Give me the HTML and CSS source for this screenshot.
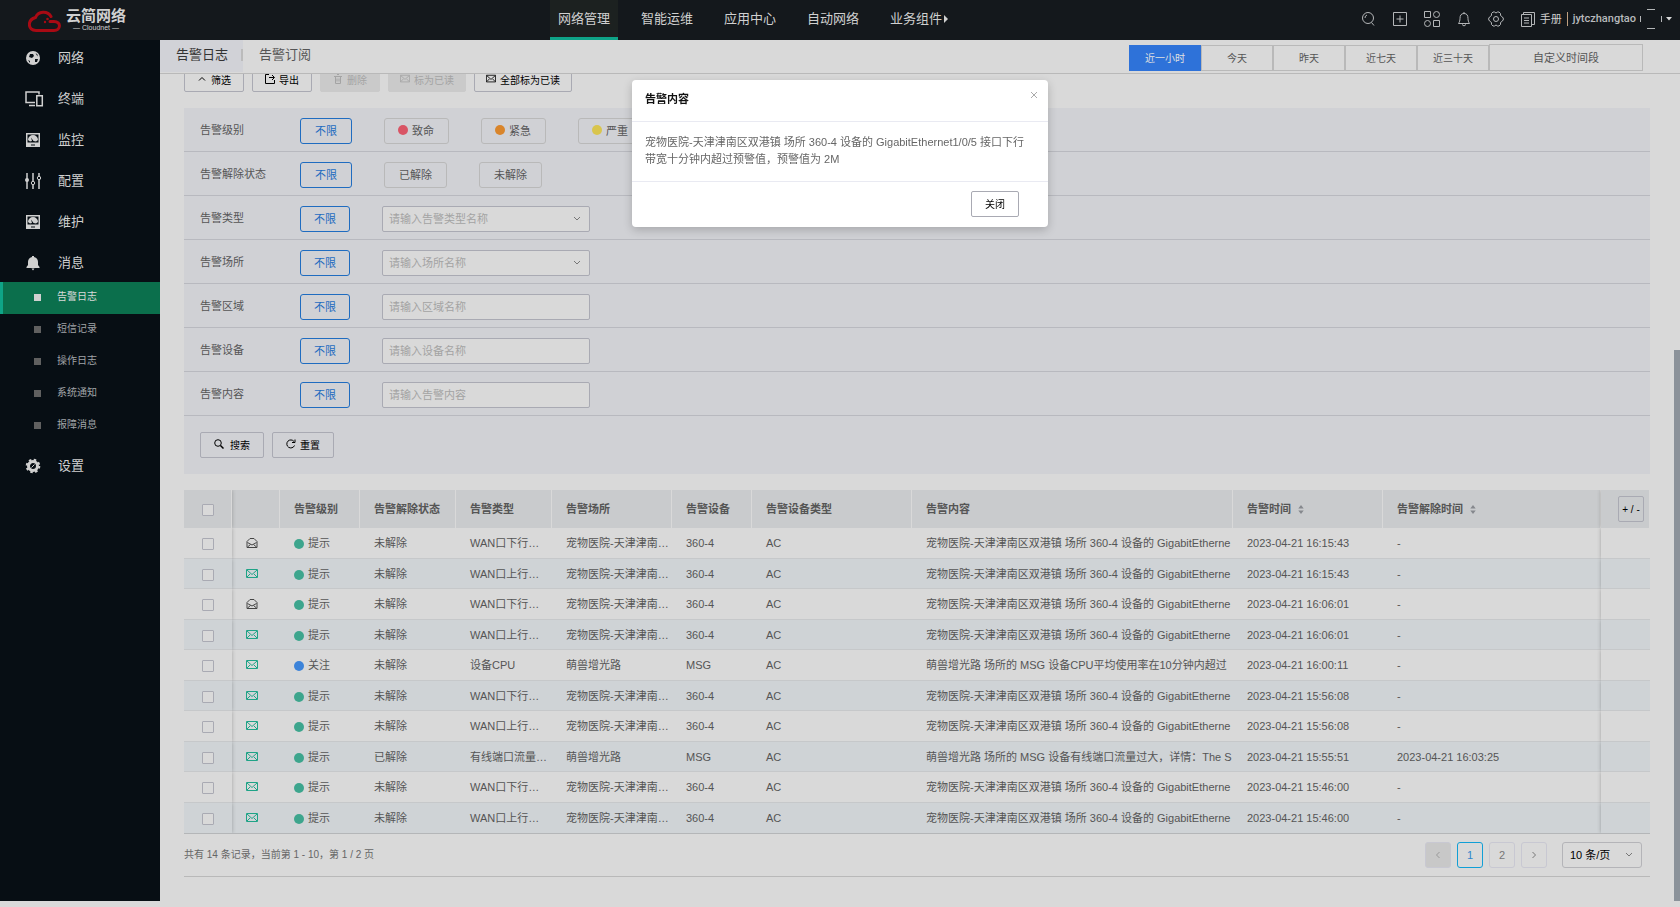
FILE: index.html
```html
<!DOCTYPE html>
<html lang="zh-CN">
<head>
    <meta charset="UTF-8">
    <meta name="viewport" content="width=device-width, initial-scale=1.0">
    <title>告警日志 - 云简网络</title>
    <link rel="stylesheet" href="styles.css">
</head>
<body>
    <!-- Shared icons -->
    <svg class="sprite" aria-hidden="true">
        <symbol id="i-gauge" viewBox="0 0 16 16"><path fill="currentColor" fill-rule="evenodd" d="M1 1h14v14H1zM2.500 2.500v8h11v-8z"/><path fill="currentColor" d="M3 8a5 5 0 0 1 10 0l-2 1.500-2.500-.5L6 5.500 7 9 5 9.500z"/><path stroke="#070e14" d="M6 13h4"/></symbol>
        <symbol id="i-mail" viewBox="0 0 12 10"><path fill="none" stroke="currentColor" d="M.5.5h11v8H.5zM1 1l5 4.500L11 1M1 8l3-3M11 8 8 5"/></symbol>
        <symbol id="i-mail-open" viewBox="0 0 12 12"><path fill="none" stroke="currentColor" d="M1 10.500V4.500l3-3h4l3 3v6zM1.500 5.500 6 8l4.500-2.500M1.500 10l3-2.500M10.500 10l-3-2.500"/></symbol>
    </svg>

    <header class="header">
        <div class="brand">
            <svg class="brand-cloud" viewBox="0 0 34 25" aria-hidden="true"><path fill="none" stroke="#a80a14" stroke-width="3" stroke-linecap="round" d="M23 8.500A8.500 8 0 0 0 7.500 9.500C-1 12-.5 22.500 8 22.500h18c7 0 7.500-9 0-9h-4"/><g fill="#a80a14"><circle cx="19.500" cy="11" r="1.300"/><circle cx="17" cy="14" r="1.200"/></g></svg>
            <div class="brand-text">
                <strong>云简网络</strong>
                <small>— Cloudnet —</small>
            </div>
        </div>
        <nav class="top-nav">
            <a href="#" class="active">网络管理</a>
            <a href="#">智能运维</a>
            <a href="#">应用中心</a>
            <a href="#">自动网络</a>
            <a href="#">业务组件<svg width="5" height="8" viewBox="0 0 5 8"><path fill="currentColor" d="M0 0l4 4-4 4z"/></svg></a>
        </nav>
        <div class="header-actions">
            <button type="button" aria-label="搜索"><svg viewBox="0 0 16 16"><circle cx="8" cy="7" r="5.500"/><path d="M11.500 11.500 14 14.500M5 7a3 3 0 0 1 2-3"/></svg></button>
            <button type="button" aria-label="添加"><svg viewBox="0 0 16 16"><path d="M1.500 1.500h13v13h-13zM8 4.500v7M4.500 8h7"/></svg></button>
            <button type="button" aria-label="应用"><svg viewBox="0 0 16 16"><path d="M.5.500h6v6h-6zM9.500 9.500h6v6h-6z"/><circle cx="12.500" cy="3.500" r="3"/><circle cx="3.500" cy="12.500" r="3"/></svg></button>
            <button type="button" aria-label="通知"><svg viewBox="0 0 16 16"><path d="M8 1v1.500M8 2.500c-3 0-4 2-4 5 0 2-.5 3.500-1.500 5h11c-1-1.500-1.500-3-1.500-5 0-3-1-5-4-5zM6 13.500l2 1.500 2-1.500"/></svg></button>
            <button type="button" aria-label="设置"><svg viewBox="0 0 16 16"><path d="M5 1h1.500L8 2l1.500-1H11l1.500 1.500v2l2 1.500L15.500 8l-1 2-2 1.500v2L11 15H9.500L8 14l-1.500 1H5l-1.500-1.500v-2l-2-1.500-1-2 1-2 2-1.500v-2z"/><circle cx="8" cy="8" r="2.500"/></svg></button>
            <a href="#" class="manual"><svg viewBox="0 0 16 16"><path d="M1.500 3.500h10v12h-10zM3.500 3.500v-2h11v12h-3M4 7h5M4 9.500h5M4 12h5"/></svg>手册</a>
            <span class="divider"></span>
            <a href="#" class="user">jytczhangtao
                <svg class="avatar" viewBox="0 0 22 20"><path d="M7 .5h8M7 19.500h8M.5 7v6M21.500 7v6"/></svg>
                <svg class="caret" viewBox="0 0 6 4"><path d="M0 0h6L3 3.500z"/></svg>
            </a>
        </div>
    </header>

    <div class="layout">
        <aside class="sidebar">
            <ul class="menu">
                <li><a href="#"><svg viewBox="0 0 16 16"><circle cx="8" cy="8" r="7" fill="currentColor"/><path fill="#070e14" d="M5 4h3l1 2-2 2-3-1zM10 9l3 0-1 3-2 0zM3 10l2 1 0 2zM10.500 3l2 1.500v2z"/></svg>网络</a></li>
                <li><a href="#"><svg class="wide" viewBox="0 0 19 16"><path fill="none" stroke="currentColor" stroke-width="1.500" d="M10 11.500H1V1h13v2.500M4 14.500h6"/><path fill="none" stroke="currentColor" stroke-width="1.500" d="M11.800 4.800h5.500v10h-5.500z"/></svg>终端</a></li>
                <li><a href="#"><svg><use href="#i-gauge"/></svg>监控</a></li>
                <li><a href="#"><svg viewBox="0 0 16 16"><path fill="none" stroke="currentColor" stroke-width="1.500" d="M2 0v16M8 0v8M8 12v4M14 0v3M14 7v9"/><circle cx="2" cy="7" r="2" fill="currentColor"/><circle cx="8" cy="10" r="1.700" fill="none" stroke="currentColor"/><circle cx="14" cy="5" r="1.700" fill="none" stroke="currentColor"/></svg>配置</a></li>
                <li><a href="#"><svg><use href="#i-gauge"/></svg>维护</a></li>
                <li>
                    <a href="#"><svg viewBox="0 0 16 16"><path fill="currentColor" d="M7 1h2v1c3 .5 4 3 4 5v3l1.500 2v1h-13v-1L3 10V7c0-2 1-4.500 4-5zM6.500 13.500h3L8 15.500z"/></svg>消息</a>
                    <ul class="submenu">
                        <li class="active"><a href="#">告警日志</a></li>
                        <li><a href="#">短信记录</a></li>
                        <li><a href="#">操作日志</a></li>
                        <li><a href="#">系统通知</a></li>
                        <li><a href="#">报障消息</a></li>
                    </ul>
                </li>
                <li><a href="#"><svg viewBox="0 0 16 16"><circle cx="8" cy="8" r="4.500" fill="none" stroke="currentColor" stroke-width="3"/><circle cx="8" cy="8" r="6.300" fill="none" stroke="currentColor" stroke-width="2" stroke-dasharray="2.500 2.450"/><path stroke="currentColor" d="M6.500 9.500l3-3"/></svg>设置</a></li>
            </ul>
        </aside>

        <main class="main">
            <div class="tab-bar">
                <a href="#" class="tab active">告警日志</a>
                <a href="#" class="tab">告警订阅</a>
                <div class="date-range">
                    <button type="button" class="active">近一小时</button>
                    <button type="button">今天</button>
                    <button type="button">昨天</button>
                    <button type="button">近七天</button>
                    <button type="button">近三十天</button>
                    <button type="button" class="custom">自定义时间段</button>
                </div>
            </div>

            <div class="content">
                <div class="toolbar">
                    <button type="button" class="btn"><svg viewBox="0 0 10 10"><path d="M2 6.500l3-3 3 3"/></svg>筛选</button>
                    <button type="button" class="btn"><svg viewBox="0 0 10 10"><path d="M4 .5H.5v9h9V6M4 3.500h5M7 1l2.500 2.500L7 6"/></svg>导出</button>
                    <button type="button" class="btn" disabled><svg viewBox="0 0 10 10"><path d="M1 2.500h8M4 .5h2M2.500 2.500v7h5v-7M4 4.500v3M6 4.500v3"/></svg>删除</button>
                    <button type="button" class="btn tight" disabled><svg><use href="#i-mail"/></svg>标为已读</button>
                    <button type="button" class="btn tight"><svg><use href="#i-mail"/></svg>全部标为已读</button>
                </div>

                <form class="filters">
                    <div class="filter-row">
                        <span class="filter-label">告警级别</span>
                        <button type="button" class="option all">不限</button>
                        <button type="button" class="option"><i class="dot fatal"></i>致命</button>
                        <button type="button" class="option"><i class="dot urgent"></i>紧急</button>
                        <button type="button" class="option"><i class="dot serious"></i>严重</button>
                    </div>
                    <div class="filter-row">
                        <span class="filter-label">告警解除状态</span>
                        <button type="button" class="option all">不限</button>
                        <button type="button" class="option">已解除</button>
                        <button type="button" class="option">未解除</button>
                    </div>
                    <div class="filter-row">
                        <label class="filter-label" for="type">告警类型</label>
                        <button type="button" class="option all small">不限</button>
                        <select id="type" class="field"><option>请输入告警类型名称</option></select>
                    </div>
                    <div class="filter-row">
                        <label class="filter-label" for="site">告警场所</label>
                        <button type="button" class="option all small">不限</button>
                        <select id="site" class="field"><option>请输入场所名称</option></select>
                    </div>
                    <div class="filter-row">
                        <label class="filter-label" for="area">告警区域</label>
                        <button type="button" class="option all small">不限</button>
                        <input id="area" class="field" type="text" placeholder="请输入区域名称">
                    </div>
                    <div class="filter-row">
                        <label class="filter-label" for="device">告警设备</label>
                        <button type="button" class="option all small">不限</button>
                        <input id="device" class="field" type="text" placeholder="请输入设备名称">
                    </div>
                    <div class="filter-row">
                        <label class="filter-label" for="message">告警内容</label>
                        <button type="button" class="option all small">不限</button>
                        <input id="message" class="field" type="text" placeholder="请输入告警内容">
                    </div>
                    <div class="filter-actions">
                        <button type="button" class="btn"><svg viewBox="0 0 10 10"><circle cx="4" cy="4" r="3.300"/><path stroke-width="1.500" d="M6.500 6.500 9.500 9.500"/></svg>搜索</button>
                        <button type="button" class="btn tight"><svg viewBox="0 0 10 10"><path d="M8.500 6.500A4 4 0 1 1 8 2.500M9 .5v3H6"/></svg>重置</button>
                    </div>
                </form>

                <table class="log-table">
                    <colgroup>
                        <col class="c-check"><col class="c-icon"><col class="c-level"><col class="c-state"><col class="c-type"><col class="c-site"><col class="c-device"><col class="c-kind"><col class="c-text"><col class="c-time"><col><col class="c-tool">
                    </colgroup>
                    <thead>
                        <tr>
                            <th class="pin-left"><input type="checkbox" aria-label="全选"></th>
                            <th></th>
                            <th>告警级别</th>
                            <th>告警解除状态</th>
                            <th>告警类型</th>
                            <th>告警场所</th>
                            <th>告警设备</th>
                            <th>告警设备类型</th>
                            <th>告警内容</th>
                            <th>告警时间<svg class="sort" viewBox="0 0 6 10"><path d="M0 4l3-4 3 4zM0 6h6l-3 4z"/></svg></th>
                            <th>告警解除时间<svg class="sort" viewBox="0 0 6 10"><path d="M0 4l3-4 3 4zM0 6h6l-3 4z"/></svg></th>
                            <th class="pin-right"><button type="button" class="columns">+ / -</button></th>
                        </tr>
                    </thead>
                    <tbody id="logRows"></tbody>
                </table>

                <div class="pager">
                    <span class="pager-info">共有 14 条记录，当前第 1 - 10，第 1 / 2 页</span>
                    <button type="button" class="page" disabled aria-label="上一页"><svg viewBox="0 0 8 8"><path d="M5.500 1l-3 3 3 3"/></svg></button>
                    <button type="button" class="page current">1</button>
                    <button type="button" class="page">2</button>
                    <button type="button" class="page" aria-label="下一页"><svg viewBox="0 0 8 8"><path d="M2.500 1l3 3-3 3"/></svg></button>
                    <select class="page-size" aria-label="每页条数"><option>10 条/页</option></select>
                </div>
            </div>
            <div class="scroll-thumb"></div>
        </main>
    </div>

    <section class="modal" role="dialog" aria-labelledby="modalTitle">
        <div class="modal-header">
            <h2 id="modalTitle">告警内容</h2>
            <button type="button" class="modal-close" aria-label="关闭"><svg viewBox="0 0 8 8"><path d="M1 1l6 6M7 1 1 7"/></svg></button>
        </div>
        <p class="modal-body">宠物医院-天津津南区双港镇 场所 360-4 设备的 GigabitEthernet1/0/5 接口下行带宽十分钟内超过预警值，预警值为 2M</p>
        <div class="modal-footer">
            <button type="button" class="btn">关闭</button>
        </div>
    </section>

    <script src="script.js"></script>
</body>
</html>
```
FILE: script.js
```js
// Alarm records of the current page
const hospital = "宠物医院-天津津南区双港镇";
const hospitalText = hospital + " 场所 360-4 设备的 GigabitEtherne";
const down = { level: "提示", state: "未解除", type: "WAN口下行带宽", site: hospital, device: "360-4", text: hospitalText, end: "-" };
const up = { ...down, type: "WAN口上行带宽" };

const logs = [
    { ...down, time: "2023-04-21 16:15:43", read: true },
    { ...up, time: "2023-04-21 16:15:43" },
    { ...down, time: "2023-04-21 16:06:01", read: true },
    { ...up, time: "2023-04-21 16:06:01" },
    { level: "关注", state: "未解除", type: "设备CPU", site: "萌兽增光路", device: "MSG", text: "萌兽增光路 场所的 MSG 设备CPU平均使用率在10分钟内超过", time: "2023-04-21 16:00:11", end: "-" },
    { ...down, time: "2023-04-21 15:56:08" },
    { ...up, time: "2023-04-21 15:56:08" },
    { level: "提示", state: "已解除", type: "有线端口流量过大", site: "萌兽增光路", device: "MSG", text: "萌兽增光路 场所的 MSG 设备有线端口流量过大，详情：The S", time: "2023-04-21 15:55:51", end: "2023-04-21 16:03:25" },
    { ...down, time: "2023-04-21 15:46:00" },
    { ...up, time: "2023-04-21 15:46:00" }
];

// Fill the table body
document.getElementById("logRows").innerHTML = logs.map(log => `
    <tr>
        <td class="pin-left"><input type="checkbox" aria-label="选择"></td>
        <td><svg class="mail ${log.read ? "read" : ""}"><use href="#${log.read ? "i-mail-open" : "i-mail"}"/></svg></td>
        <td><i class="dot ${log.level === "关注" ? "notice" : "hint"}"></i>${log.level}</td>
        <td>${log.state}</td>
        <td>${log.type}</td>
        <td>${log.site}</td>
        <td>${log.device}</td>
        <td>AC</td>
        <td class="clip">${log.text}</td>
        <td>${log.time}</td>
        <td>${log.end}</td>
        <td class="pin-right"></td>
    </tr>`).join("");
```
FILE: styles.css
```css
* {
    box-sizing: border-box;
}

body {
    font-family: "Liberation Sans", "Noto Sans CJK SC", sans-serif;
    font-size: 11px;
    line-height: 16px;
    color: #555;
    background-color: #d9d9d9;
    margin: 0;
    min-height: 100vh;
    display: flex;
    flex-direction: column;
}

button, input, select {
    font-family: inherit;
    font-size: 11px;
    color: inherit;
    margin: 0;
}

button {
    cursor: pointer;
    padding: 0;
    background: none;
    border: none;
}

a {
    color: inherit;
    text-decoration: none;
}

ul {
    list-style: none;
    margin: 0;
    padding: 0;
}

.sprite {
    position: absolute;
    width: 0;
    height: 0;
}

/* Header */
.header {
    display: flex;
    height: 40px;
    background-color: #14181c;
    color: #d0d0d0;
}

.brand {
    flex: 0 0 550px;
    display: flex;
    align-items: center;
    gap: 4px;
    padding-left: 28px;
}

.brand-cloud {
    width: 34px;
    height: 25px;
}

.brand-text {
    display: flex;
    flex-direction: column;
    align-items: center;
}

.brand-text strong {
    font-size: 15px;
    line-height: 16px;
}

.brand-text small {
    font-size: 7px;
    line-height: 8px;
}

.top-nav {
    display: flex;
    gap: 15px;
}

.top-nav a {
    display: flex;
    align-items: center;
    gap: 2px;
    padding: 0 8px 2px;
    font-size: 13px;
}

.top-nav a.active {
    background-color: #1c2120;
    box-shadow: inset 0 -3px #0fa487;
}

.header-actions {
    display: flex;
    align-items: center;
    margin-left: auto;
    padding-right: 8px;
    padding-bottom: 2px;
}

.header-actions button {
    width: 32px;
    height: 32px;
    display: flex;
    align-items: center;
    justify-content: center;
}

.header-actions svg {
    width: 16px;
    height: 16px;
    fill: none;
    stroke: #b4b6b8;
}

.manual {
    display: flex;
    align-items: center;
    gap: 4px;
    padding-left: 8px;
}

.divider {
    width: 1px;
    height: 14px;
    margin: 0 5px;
    background-color: #c0a080;
}

.user {
    display: flex;
    align-items: center;
    gap: 4px;
    font-family: Roboto, sans-serif;
    font-size: 11px;
    font-weight: 500;
    color: #b8babc;
}

.header-actions .avatar {
    width: 22px;
    height: 20px;
}

.header-actions .caret {
    width: 6px;
    height: 4px;
    fill: #d9d9d9;
    stroke: none;
}

/* Sidebar */
.layout {
    flex: 1;
    display: flex;
    margin-bottom: 6px;
}

.sidebar {
    flex: 0 0 160px;
    background-color: #070e14;
    color: #d0d0d0;
}

.menu > li {
    margin-bottom: 5px;
}

.menu > li > a {
    display: flex;
    align-items: center;
    gap: 17px;
    height: 36px;
    padding-left: 25px;
    font-size: 13px;
}

.menu svg {
    width: 16px;
    height: 16px;
}

.menu .wide {
    width: 19px;
    margin-right: -3px;
}

.submenu {
    padding: 1px 0;
}

.submenu a {
    display: flex;
    align-items: center;
    gap: 16px;
    height: 32px;
    padding-left: 31px;
    padding-bottom: 2px;
    border-left: 3px solid transparent;
    font-size: 10px;
    color: #a0a4a8;
}

.submenu a::before {
    content: "";
    width: 7px;
    height: 7px;
    background-color: #606060;
}

.submenu .active a {
    background-color: #0b6f4c;
    border-left-color: #0fa487;
    color: #d9d9d9;
}

.submenu .active a::before {
    background-color: #d0d0d0;
}

/* Tabs and date range */
.main {
    position: relative;
    flex: 1;
    min-width: 0;
}

.tab-bar {
    display: flex;
    height: 34px;
    padding-right: 37px;
    border-bottom: 1px solid #b9b9b9;
}

.tab {
    display: flex;
    align-items: center;
    padding: 0 16px 2px;
    margin-bottom: 1px;
    font-size: 13px;
}

.tab.active {
    padding-right: 0;
    background-color: #d1d2d7;
    color: #333;
}

.tab.active::after {
    content: "";
    width: 2px;
    height: 12px;
    margin-left: 13px;
    background-color: #bbb;
}

.date-range {
    display: flex;
    align-items: flex-end;
    margin-left: auto;
    padding-bottom: 2px;
}

.date-range button {
    width: 72px;
    height: 26px;
    padding-bottom: 2px;
    border: 1px solid #b9b9b9;
    font-size: 10px;
}

.date-range .active {
    background-color: #2e72d9;
    border-color: #2e72d9;
    color: #e0e0e0;
}

.date-range .custom {
    width: 154px;
    height: 27px;
    font-size: 11px;
}

/* Content */
.content {
    overflow: hidden;
    padding: 0 30px 0 24px;
}

.toolbar {
    display: flex;
    gap: 8px;
    margin: -8px 0 16px;
}

.btn {
    display: inline-flex;
    align-items: center;
    justify-content: center;
    gap: 6px;
    height: 26px;
    padding: 0 13px 2px;
    border: 1px solid #a9aab3;
    border-radius: 2px;
    font-size: 10px;
    color: #000;
}

.btn svg {
    width: 10px;
    height: 10px;
    fill: none;
    stroke: currentColor;
}

.btn.tight {
    gap: 4px;
}

.toolbar .btn {
    gap: 4px;
    padding: 0 12px;
}

.toolbar .tight {
    padding: 0 11px;
}

.btn:disabled {
    background-color: #cacaca;
    border-color: #cacaca;
    color: #a4a4a4;
}

.filters {
    background-color: #d0d1d5;
}

.filter-row {
    display: flex;
    align-items: center;
    height: 44px;
    padding-top: 2px;
    padding-left: 16px;
    border-bottom: 1px solid #b8b9bf;
}

.filter-label {
    width: 100px;
    padding-bottom: 2px;
}

.option {
    display: flex;
    align-items: center;
    height: 26px;
    margin-right: 32px;
    padding: 0 14px 2px;
    border: 1px solid #b9b9b9;
    border-radius: 3px;
}

.option.all {
    border-color: #1f6cc0;
    color: #1f6cc0;
}

.option.small {
    padding: 0 13px 2px;
}

.dot {
    display: inline-block;
    width: 10px;
    height: 10px;
    margin-right: 4px;
    border-radius: 50%;
    vertical-align: -2px;
}

.option .dot {
    margin-left: -1px;
}

.fatal {
    background-color: #d95565;
}

.urgent {
    background-color: #d9852b;
}

.serious {
    background-color: #d9c54d;
}

.hint {
    background-color: #3da58d;
}

.notice {
    background-color: #3c83d9;
}

.field {
    width: 208px;
    height: 26px;
    padding: 0 6px;
    border: 1px solid #a9aab3;
    border-radius: 2px;
    background-color: #d9d9d9;
    color: #a3a3a3;
}

.field::placeholder {
    color: #a3a3a3;
}

select {
    appearance: none;
    background: #d9d9d9 url("data:image/svg+xml,%3Csvg xmlns='http://www.w3.org/2000/svg' width='8' height='8'%3E%3Cpath d='M1 2l3 3 3-3' fill='none' stroke='%23777'/%3E%3C/svg%3E") no-repeat right 8px center;
}

.filter-actions {
    display: flex;
    gap: 8px;
    padding: 16px;
}

/* Log table */
.log-table {
    width: 100%;
    margin-top: 16px;
    table-layout: fixed;
    border-collapse: separate;
    border-spacing: 0;
    border-bottom: 1px solid #b4b6b8;
}

.c-check, .c-icon {
    width: 48px;
}

.c-level, .c-device {
    width: 80px;
}

.c-state, .c-type {
    width: 96px;
}

.c-site {
    width: 120px;
}

.c-kind {
    width: 160px;
}

.c-text {
    width: 321px;
}

.c-time {
    width: 150px;
}

.c-tool {
    width: 49px;
}

.log-table th {
    height: 38px;
    padding: 0 2px 0 14px;
    background-color: #c9cbcd;
    border-right: 1px solid #d9d9d9;
    text-align: left;
}

.log-table td {
    height: 30px;
    padding: 0 2px 0 14px;
    border-bottom: 1px solid #c6c8ca;
    overflow: hidden;
    white-space: nowrap;
    text-overflow: ellipsis;
}

.log-table tbody tr:nth-child(odd) td {
    height: 31px;
}

.log-table tbody tr:nth-child(even) td {
    background-color: #cfd3d6;
}

.log-table tbody tr:last-child td {
    border-bottom: none;
}

.log-table .clip {
    padding-right: 0;
    text-overflow: clip;
}

.log-table .pin-left {
    position: relative;
    padding: 0;
    text-align: center;
    overflow: visible;
    box-shadow: 0 0 4px rgba(0, 0, 0, 0.25);
    clip-path: inset(0 -4px 0 0);
}

.log-table .pin-right {
    position: relative;
    padding: 0 5px 0 0;
    text-align: right;
    overflow: visible;
    box-shadow: 0 0 4px rgba(0, 0, 0, 0.25);
    clip-path: inset(0 0 0 -4px);
}

.log-table input {
    appearance: none;
    display: inline-block;
    width: 12px;
    height: 12px;
    border: 1px solid #a9aab3;
    border-radius: 1px;
    background-color: #d9d9d9;
    vertical-align: middle;
}

.mail {
    display: block;
    width: 12px;
    height: 10px;
    color: #1fa387;
}

.mail.read {
    height: 12px;
    color: #444;
}

.sort {
    width: 6px;
    height: 9px;
    margin-left: 7px;
    fill: #85888d;
    vertical-align: -1px;
}

.columns {
    width: 26px;
    height: 26px;
    border: 1px solid #a9aab3;
    border-radius: 2px;
    font-size: 10px;
    color: #000;
}

/* Pager */
.pager {
    display: flex;
    align-items: center;
    gap: 6px;
    height: 43px;
    padding-right: 8px;
    border-bottom: 1px solid #b9b9b9;
}

.pager-info {
    margin-right: auto;
    font-size: 10px;
    color: #666;
}

.page {
    display: flex;
    align-items: center;
    justify-content: center;
    width: 26px;
    height: 26px;
    border: 1px solid #c8c8d2;
    border-radius: 3px;
    color: #777;
}

.page svg {
    width: 8px;
    height: 8px;
    fill: none;
    stroke: currentColor;
}

.page:disabled {
    background-color: #c8c8c8;
    color: #999;
}

.page.current {
    border-color: #119fd6;
    color: #2f86cc;
}

.page-size {
    width: 80px;
    height: 26px;
    margin-left: 9px;
    padding: 0 7px;
    border: 1px solid #b4b4b8;
    border-radius: 3px;
    color: #000;
}

.scroll-thumb {
    position: absolute;
    top: 310px;
    right: 0;
    bottom: 0;
    width: 6px;
    background-color: #8b929a;
}

/* Alarm dialog */
.modal {
    position: fixed;
    top: 80px;
    left: 50%;
    width: 416px;
    margin-left: -208px;
    border-radius: 4px;
    background-color: #fff;
    box-shadow: 0 3px 10px rgba(0, 0, 0, 0.2);
}

.modal-header {
    display: flex;
    justify-content: space-between;
    align-items: flex-start;
    height: 42px;
    padding: 11px 10px 0 13px;
    border-bottom: 1px solid #e9eaf2;
}

.modal-header h2 {
    margin: 0;
    font-size: 11px;
    color: #111;
}

.modal-close {
    width: 8px;
    height: 8px;
    display: flex;
}

.modal-close svg {
    width: 8px;
    height: 8px;
    stroke: #aaa;
}

.modal-body {
    margin: 0;
    padding: 12px 18px 13px 13px;
    line-height: 17px;
    color: #666;
}

.modal-footer {
    display: flex;
    justify-content: flex-end;
    padding: 9px 29px 10px;
    border-top: 1px solid #e9eaf2;
}
```
